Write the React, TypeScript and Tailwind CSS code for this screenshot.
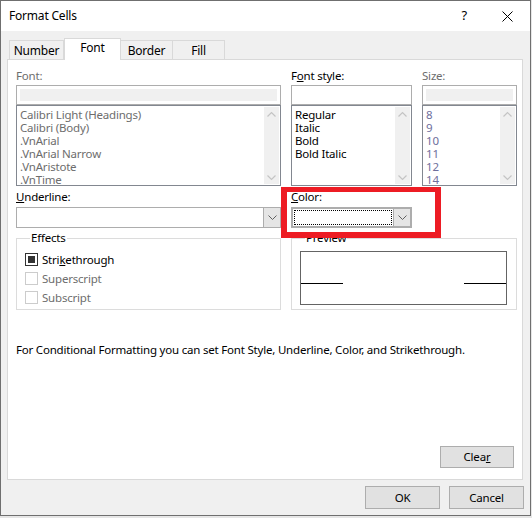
import React from 'react';

const font = { fontFamily: '"Segoe UI", "Noto Sans", sans-serif' };

function ChevronDown({ color = '#606060' }: { color?: string }) {
  return (
    <svg width="9" height="6" viewBox="0 0 9 6">
      <polyline points="0.5,0.5 4.5,4.5 8.5,0.5" fill="none" stroke={color} strokeWidth="1" />
    </svg>
  );
}

function ChevronUp({ color = '#c4c4c4' }: { color?: string }) {
  return (
    <svg width="9" height="6" viewBox="0 0 9 6">
      <polyline points="0.5,5.5 4.5,1.5 8.5,5.5" fill="none" stroke={color} strokeWidth="1.2" />
    </svg>
  );
}

function ScrollList({ items, textClass }: { items: string[]; textClass: string }) {
  return (
    <div className="flex h-[81px] border border-[#828790] bg-white">
      <div className={`flex-1 pl-[3px] pt-[2px] leading-[13px] ${textClass}`}>
        {items.map((it) => (
          <div key={it}>{it}</div>
        ))}
      </div>
      <div className="my-[1px] mr-[1px] flex w-[15px] flex-col items-center justify-between bg-[#f0f0f0] pt-[4px] pb-[3px]">
        <ChevronUp />
        <svg width="9" height="6" viewBox="0 0 9 6">
          <polyline points="0.5,0.5 4.5,4.5 8.5,0.5" fill="none" stroke="#c4c4c4" strokeWidth="1.2" />
        </svg>
      </div>
    </div>
  );
}

function Combo({ focused }: { focused?: boolean }) {
  return (
    <div className={`flex h-[21px] bg-white ${focused ? 'border-2 border-[#adadad]' : 'border border-[#adadad]'}`}>
      <div className="flex-1 p-[1px]">
        {focused && <div className="h-full w-full border border-dotted border-black" />}
      </div>
      <div className="flex w-[17px] items-center justify-center border-l border-[#adadad] bg-[#e5e5e5]">
        <ChevronDown />
      </div>
    </div>
  );
}

function Check({ label, checked, disabled, u }: { label: string; checked?: boolean; disabled?: boolean; u?: number }) {
  return (
    <div className="flex h-[19px] items-center gap-[4px]">
      <div
        className={`flex h-[13px] w-[13px] items-center justify-center border bg-white ${
          disabled ? 'border-[#cccccc]' : 'border-[#333333]'
        }`}
      >
        {checked && <div className="h-[7px] w-[7px] bg-[#333333]" />}
      </div>
      <span className={disabled ? 'text-[#6d6d6d]' : 'text-black'}>
        {u !== undefined ? (
          <>
            {label.slice(0, u)}
            <span className="underline">{label[u]}</span>
            {label.slice(u + 1)}
          </>
        ) : (
          label
        )}
      </span>
    </div>
  );
}

export default function App() {
  return (
    <div className="h-[518px] w-[532px] bg-[#e6e6e6]" style={font}>
      <div className="flex h-[516px] w-[531px] flex-col border border-[#6f6f6f] bg-[#f0f0f0] text-[11.5px] tracking-[-0.2px] text-black">
        {/* Title bar */}
        <div className="flex h-[30px] items-center bg-white pl-[8px]">
          <span className="text-[12px]">Format Cells</span>
          <span className="ml-auto mr-[35px] text-[13px]">?</span>
          <svg width="11" height="11" viewBox="0 0 11 11" className="mr-[17px]">
            <path d="M0.5 0.5 L10.5 10.5 M10.5 0.5 L0.5 10.5" stroke="#000" strokeWidth="1" />
          </svg>
        </div>

        {/* Tabs */}
        <div className="flex h-[28px] items-end pl-[8px] text-[12px]">
          {['Number', 'Font', 'Border', 'Fill'].map((t) =>
            t === 'Font' ? (
              <div
                key={t}
                className="relative z-10 -mb-px flex h-[22px] w-[57px] items-center justify-center border-x border-t border-[#d9d9d9] bg-white pb-[3px]"
              >
                {t}
              </div>
            ) : (
              <div
                key={t}
                className={`flex h-[19px] items-center justify-center border-t border-r border-[#d9d9d9] bg-[#f0f0f0] pt-[1px] ${
                  t === 'Number' ? 'w-[55px] border-l' : 'w-[52px]'
                }`}
              >
                {t}
              </div>
            )
          )}
        </div>

        {/* Panel */}
        <div className="ml-[6px] flex h-[421px] w-[516px] flex-col border border-[#d9d9d9] bg-white px-[8px] pt-[8px] pb-[11px]">
          <div className="grid grid-cols-[265px_121px_95px] gap-x-[10px]">
            {/* Font */}
            <div className="flex flex-col">
              <div className="h-[17px] leading-[16px] text-[#6d6d6d]">Font:</div>
              <div className="h-[20px] border border-[#adadad] bg-white px-[3px] py-[3px]">
                <div className="h-full bg-[#f0f0f0]" />
              </div>
              <ScrollList
                items={['Calibri Light (Headings)', 'Calibri (Body)', '.VnArial', '.VnArial Narrow', '.VnAristote', '.VnTime']}
                textClass="text-[#6d6d6d]"
              />
            </div>
            {/* Font style */}
            <div className="flex flex-col">
              <div className="h-[17px] leading-[16px]">
                F<span className="underline">o</span>nt style:
              </div>
              <div className="h-[20px] border border-[#adadad] bg-white" />
              <ScrollList items={['Regular', 'Italic', 'Bold', 'Bold Italic']} textClass="text-black" />
            </div>
            {/* Size */}
            <div className="flex flex-col">
              <div className="h-[17px] leading-[16px] text-[#6d6d6d]">Size:</div>
              <div className="h-[20px] border border-[#adadad] bg-white px-[3px] py-[3px]">
                <div className="h-full bg-[#f0f0f0]" />
              </div>
              <ScrollList items={['8', '9', '10', '11', '12', '14']} textClass="text-[#6e6e9c]" />
            </div>

            {/* Underline */}
            <div className="mt-[3px] flex flex-col">
              <div className="h-[18px] leading-[16px]">
                <span className="underline">U</span>nderline:
              </div>
              <Combo />
            </div>
            {/* Color */}
            <div className="relative mt-[3px] flex flex-col">
              <div className="h-[18px] leading-[16px]">
                <span className="underline">C</span>olor:
              </div>
              <Combo focused />
              <div className="pointer-events-none absolute top-[-2px] left-[-10px] z-20 h-[51px] w-[160px] border-[6px] border-t-[5px] border-[#ed1c24]" />
            </div>
            <div />

            {/* Effects */}
            <fieldset className="mt-[2px] h-[80px] border border-[#dcdcdc] pl-[8px] pt-[4px]">
              <legend className="ml-[5px] px-[1px] leading-[16px]">Effects</legend>
              <Check label="Strikethrough" checked u={4} />
              <Check label="Superscript" disabled />
              <Check label="Subscript" disabled />
            </fieldset>
            {/* Preview */}
            <fieldset className="col-span-2 mt-[2px] h-[80px] border border-[#dcdcdc] pl-[8px] pt-[5px]">
              <legend className="ml-[5px] px-[1px] leading-[16px]">Preview</legend>
              <div className="flex h-[54px] w-[207px] items-start justify-between border border-[#646464] bg-white pt-[31px]">
                <div className="h-px w-[42px] bg-black" />
                <div className="h-px w-[42px] bg-black" />
              </div>
            </fieldset>
          </div>

          <div className="mt-[32px] leading-[16px]">
            For Conditional Formatting you can set Font Style, Underline, Color, and Strikethrough.
          </div>

          <div className="mt-auto flex justify-end">
            <button className="h-[22px] w-[74px] border border-[#adadad] bg-[#e1e1e1]">
              Clea<span className="underline">r</span>
            </button>
          </div>
        </div>

        {/* Footer */}
        <div className="mt-[6px] flex justify-end gap-[9px] pr-[6px]">
          <button className="h-[23px] w-[75px] border border-[#adadad] bg-[#e1e1e1]">OK</button>
          <button className="h-[23px] w-[75px] border border-[#adadad] bg-[#e1e1e1]">Cancel</button>
        </div>
      </div>
    </div>
  );
}
